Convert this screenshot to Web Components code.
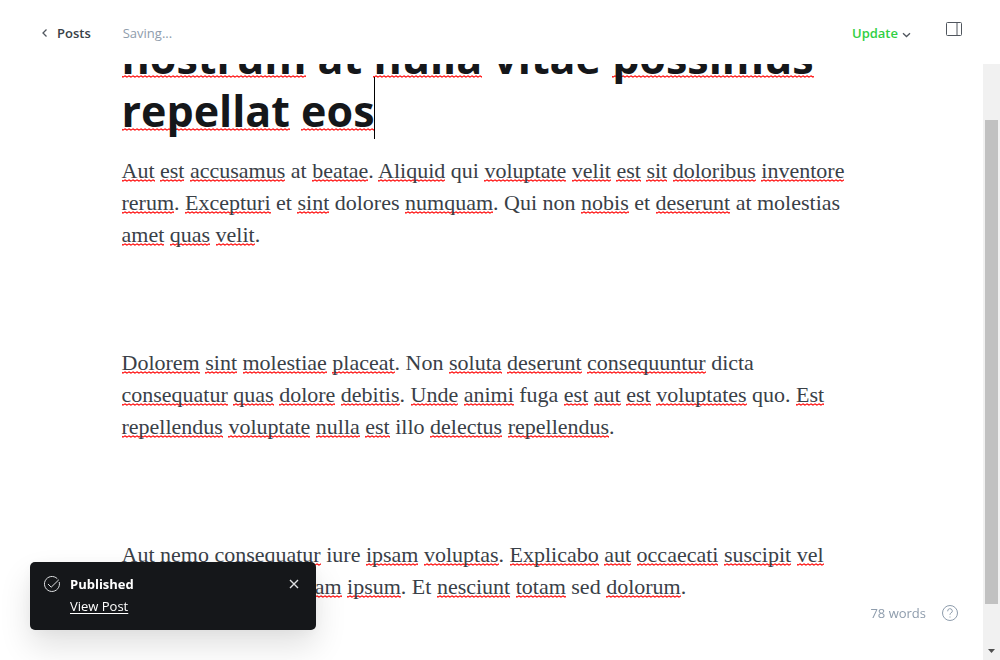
<!DOCTYPE html>
<html lang="en">
<head>
<meta charset="utf-8">
<title>Post editor</title>
<style>
html, body { margin: 0; height: 100%; }
body { font: 13px/20px "Open Sans", "Noto Sans", sans-serif; color: #394047; background: #fff; }
</style>
</head>
<body>
<editor-app></editor-app>
<script>
function define(name, html) {
  const template = document.createElement('template');
  template.innerHTML = html;
  customElements.define(name, class extends HTMLElement {
    constructor() {
      super();
      this.attachShadow({ mode: 'open' }).append(template.content.cloneNode(true));
    }
  });
}

const squiggle = `background: url("data:image/svg+xml,%3Csvg xmlns='http://www.w3.org/2000/svg' width='4' height='3'%3E%3Cpath d='M-1 .8 1 2.200 3 .8 5 2.200' fill='none' stroke='red' stroke-width='1.1'/%3E%3C/svg%3E") repeat-x; text-decoration: none;`;

define('post-title', `
<style>
  :host { display: block; }
  h1 { margin: 0; font-size: 43px; line-height: 53px; font-weight: 700; color: #15171a; white-space: nowrap; }
  ::slotted(u) { ${squiggle} background-position: left bottom 9px; }
  .caret { position: relative; }
  .caret::after { content: ""; position: absolute; right: 0; top: -4px; bottom: 1px; width: 1px; background: #000; }
</style>
<h1><slot></slot><span class="caret"></span></h1>`);

define('post-paragraph', `
<style>
  :host { display: block; }
  p { margin: 0 0 32px; min-height: 32px; font: 22px/32px "Liberation Serif", serif; white-space: nowrap; }
  ::slotted(u) { ${squiggle} background-position: left bottom 1px; }
</style>
<p><slot></slot></p>`);

define('editor-header', `
<style>
  :host { display: flex; align-items: center; height: 64px; padding: 2px 37px 0 40px; box-sizing: border-box; background: #fff; }
  a, button { font: inherit; font-weight: 600; color: inherit; text-decoration: none; background: none; border: 0; padding: 0; cursor: pointer; display: flex; align-items: center; }
  a { gap: 8px; }
  .status { color: #8e9cac; margin-left: 32px; }
  .update { color: #30cf43; margin-left: auto; gap: 4px; }
  .update svg { margin-top: 4px; }
  .panel { margin: 0 0 8px 34px; }
  svg { display: block; fill: none; stroke: #50565e; }
</style>
<a href="#posts"><svg width="9" height="10" viewBox="0 0 9 10" stroke-width="1.3"><path d="M6.500 1.500 3 5l3.500 3.500"/></svg>Posts</a>
<span class="status" role="status">Saving...</span>
<button class="update" type="button">Update<svg width="9" height="6" viewBox="0 0 9 6" stroke-width="1.300"><path d="M1 1.200 4.500 4.500 8 1.200"/></svg></button>
<button class="panel" type="button" aria-label="Settings"><svg width="18" height="14" viewBox="0 0 18 14"><rect x="1.500" y=".5" width="15" height="13" rx="1"/><path d="M12 .5v13"/></svg></button>`);

define('scroll-rail', `
<style>
  :host { display: flex; flex-direction: column; width: 17px; background: #f1f1f1; }
  .thumb { flex: 1; margin: 56px 2px 45px; background: #c1c1c1; }
  svg { display: block; margin: 0 auto 7px; }
</style>
<div class="thumb"></div>
<svg width="7" height="4" fill="#505050"><path d="M0 0h7L3.500 4z"/></svg>`);

define('word-count', `
<style>
  :host { display: flex; align-items: center; gap: 16px; color: #8e9cac; }
  a { color: inherit; }
  svg { display: block; fill: none; stroke: currentColor; }
</style>
<span><slot></slot></span>
<a href="#help" aria-label="Help"><svg width="16" height="16" viewBox="0 0 16 16"><circle cx="8" cy="8" r="7.5"/><path d="M5.700 6.300V6a2.300 2.300 0 1 1 3.400 2C8.300 8.400 8 8.700 8 9.500v.4"/><path d="M7.500 12h1"/></svg></a>`);

define('editor-toast', `
<style>
  :host { display: grid; grid-template-columns: 16px 1fr 10px; gap: 2px 10px; align-items: center; box-sizing: border-box; width: 286px; padding: 12px 17px 14px 14px; background: #15171a; color: #fff; border-radius: 5px; box-shadow: 0 16px 32px rgba(0,0,0,.12), 0 2px 16px rgba(0,0,0,.04); }
  strong { font-weight: 700; }
  a { grid-column: 2; justify-self: start; color: inherit; text-underline-offset: 2px; }
  button { background: none; border: 0; padding: 0; cursor: pointer; }
  svg { display: block; fill: none; stroke: #dfe1e3; }
</style>
<svg width="16" height="16" viewBox="0 0 16 16"><path d="M15.200 6A7.500 7.500 0 1 1 13.300 2.700M4 8l3.200 3.200 7.600-7.400"/></svg>
<strong><slot></slot></strong>
<button type="button" aria-label="Close"><svg width="10" height="10" viewBox="0 0 10 10" stroke-width="1.4"><path d="m1 1 8 8M9 1 1 9"/></svg></button>
<a href="#post">View Post</a>`);

define('editor-app', `
<style>
  :host { display: flex; flex-direction: column; height: 100vh; overflow: hidden; }
  main { flex: 1; min-height: 0; display: flex; overflow: hidden; }
  .canvas { flex: 1; min-width: 0; overflow: hidden; }
  article { max-width: 740px; margin: -33px auto 0; }
  post-title { margin-bottom: 18px; }
  word-count { position: fixed; right: 42px; bottom: 37px; }
  editor-toast { position: fixed; left: 30px; bottom: 30px; }
</style>
<editor-header></editor-header>
<main>
  <div class="canvas"><article>
    <post-title><u>nostrum</u> at <u>nulla</u> vitae <u>possimus</u><br><u>repellat</u> <u>eos</u></post-title>
    <post-paragraph><u>Aut</u> <u>est</u> <u>accusamus</u> at <u>beatae</u>. <u>Aliquid</u> qui <u>voluptate</u> <u>velit</u> <u>est</u> <u>sit</u> <u>doloribus</u> <u>inventore</u><br><u>rerum</u>. <u>Excepturi</u> et <u>sint</u> dolores <u>numquam</u>. Qui non <u>nobis</u> et <u>deserunt</u> at molestias<br><u>amet</u> <u>quas</u> <u>velit</u>.</post-paragraph>
    <post-paragraph></post-paragraph>
    <post-paragraph><u>Dolorem</u> <u>sint</u> <u>molestiae</u> <u>placeat</u>. Non <u>soluta</u> <u>deserunt</u> <u>consequuntur</u> dicta<br><u>consequatur</u> <u>quas</u> <u>dolore</u> <u>debitis</u>. <u>Unde</u> <u>animi</u> fuga <u>est</u> <u>aut</u> <u>est</u> <u>voluptates</u> quo. <u>Est</u><br><u>repellendus</u> <u>voluptate</u> <u>nulla</u> <u>est</u> illo <u>delectus</u> <u>repellendus</u>.</post-paragraph>
    <post-paragraph></post-paragraph>
    <post-paragraph><u>Aut</u> <u>nemo</u> <u>consequatur</u> iure <u>ipsam</u> <u>voluptas</u>. <u>Explicabo</u> <u>aut</u> <u>occaecati</u> <u>suscipit</u> <u>vel</u><br><u>dolor</u> <u>voluptas</u> <u>numquam</u> <u>ipsum</u>. Et <u>nesciunt</u> <u>totam</u> sed <u>dolorum</u>.</post-paragraph>
  </article></div>
  <scroll-rail></scroll-rail>
</main>
<word-count>78 words</word-count>
<editor-toast>Published</editor-toast>`);
</script>
</body>
</html>
